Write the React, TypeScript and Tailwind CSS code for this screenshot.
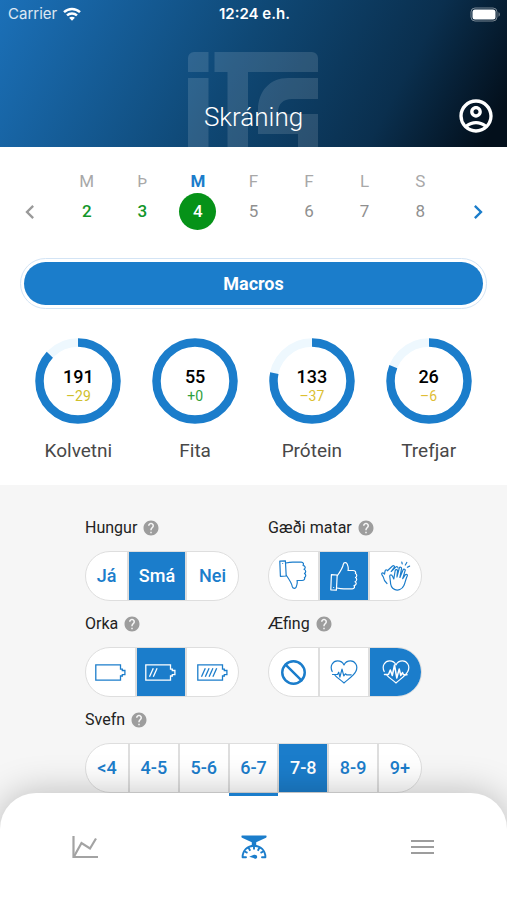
import { useState, type ReactNode } from 'react';
import { Ban } from 'lucide-react';
import { MdChevronLeft, MdChevronRight, MdHelp, MdOutlineAccountCircle } from 'react-icons/md';

const days = [
  { letter: 'M', date: 2, logged: true },
  { letter: 'Þ', date: 3, logged: true },
  { letter: 'M', date: 4, logged: true },
  { letter: 'F', date: 5, logged: false },
  { letter: 'F', date: 6, logged: false },
  { letter: 'L', date: 7, logged: false },
  { letter: 'S', date: 8, logged: false },
];

const macros = [
  { name: 'Kolvetni', value: 191, diff: '–29', progress: 0.868, color: 'text-[#cfc02c]' },
  { name: 'Fita', value: 55, diff: '+0', progress: 1, color: 'text-[#2fa03c]' },
  { name: 'Prótein', value: 133, diff: '–37', progress: 0.782, color: 'text-[#dcc030]' },
  { name: 'Trefjar', value: 26, diff: '–6', progress: 0.81, color: 'text-[#e0bd35]' },
];

function StatusBar() {
  return (
    <div className="self-start grid grid-cols-3 items-center pl-2 pr-1.5 pt-1 font-['Inter',sans-serif] text-[15px] leading-5">
      <div className="flex items-center gap-1.5">
        <span className="text-white/85">Carrier</span>
        <svg width="18" height="14" viewBox="0 0 18 14" fill="none" stroke="#fff" strokeWidth="2.4">
          <path d="M1 5.2C5.5.9 12.5.9 17 5.2" />
          <path d="M4 8.4c2.8-2.6 7.2-2.6 10 0" />
          <path d="M9 13.8 6.1 10.8c1.6-1.4 4.2-1.4 5.8 0z" fill="#fff" stroke="none" />
        </svg>
      </div>
      <span className="text-center font-semibold">12:24 e.h.</span>
      <svg className="justify-self-end" width="31" height="15" viewBox="0 0 31 15">
        <rect x="1" y="1" width="26" height="13" rx="4" fill="none" stroke="#fff" strokeOpacity=".45" />
        <rect x="2.500" y="2.500" width="23" height="10" rx="2.500" fill="#fff" />
        <path d="M28.5 5.3c1.8.6 1.8 3.8 0 4.4z" fill="#fff" fillOpacity=".45" />
      </svg>
    </div>
  );
}

function LogoMark() {
  return (
    <svg width="131" height="95" viewBox="0 0 131 95" fill="#fff" fillOpacity=".13">
      <path d="M0 20V6a6 6 0 0 1 6-6h14.500v20zM0 26h20.500v69H0z" />
      <path d="M26.500 0H124a6 6 0 0 1 6 6v14H60v75H39.500V20h-13z" />
      <path d="M130 26v21h-26c-9 0-14 5-14 14v1h40v33h-20V82H70V58c0-19 12-32 30-32z" />
    </svg>
  );
}

function Ring({ progress }: { progress: number }) {
  const length = 2 * Math.PI * 38.5;
  return (
    <svg className="col-start-1 row-start-1 -rotate-90" width="86" height="86" viewBox="0 0 86 86" fill="none" strokeWidth="8.500">
      <circle cx="43" cy="43" r="38.500" stroke="#eef8fe" />
      <circle cx="43" cy="43" r="38.500" stroke="#1b7dcb" strokeDasharray={`${length * progress} ${length}`} />
    </svg>
  );
}

function Thumb({ up = false }: { up?: boolean }) {
  return (
    <svg
      className={up ? '-scale-y-100' : 'mb-1'}
      width="28"
      height="29"
      viewBox="0 0 28 29"
      fill="none"
      stroke="currentColor"
      strokeWidth="1.200"
      strokeLinejoin="round"
    >
      <path d="M.8 1.200 6.400.8l.8 15.200-5.800.3z" />
      <path d="M3.600 3.300v.8" />
      <path d="M6.800 3c3-.6 5-1 8-.8h7.400c2.200.1 2.800 1.700 1.800 3.100 2.600.4 2.800 3 1 4 2 .6 2.300 3.200.5 4.200 1.700 1 1.600 3.400-.1 4 .8 1.800-.4 3-2.400 3h-5c.8 2.600 0 4.500-.8 6.500-.7 1.900-3.500 1.700-3.900-.3-.6-3.700-3.500-7.900-6.200-11.700" />
    </svg>
  );
}

function Clap() {
  return (
    <svg width="30" height="30" viewBox="0 0 30 30" fill="none" stroke="currentColor" strokeWidth="1.200" strokeLinecap="round" strokeLinejoin="round">
      <path d="M9.400 20.500 8.700 15c.2-1.600 2.200-1.500 2.700 0l1.400 3 1.400-8.500c.5-1.400 2.400-1 2.300.5l-.6 6 2.400-9c.6-1.400 2.500-.8 2.200.8l-1.600 8.600 3.200-7.700c.7-1.200 2.500-.4 2 1l-2.400 8 2.700-4c.9-1 2.400.1 1.800 1.300-1.700 3.500-1.700 6-3.300 9.500-1.800 4-6 5.500-9.400 3.900-3.400-1.600-4.100-5.500-4.100-7.900z" />
      <path d="M6 22.500C3.500 20.500 2.700 18.500 2.300 16L.9 13.600c-.6-1.400.8-2.200 1.800-1.200l.8.8.6-3.400c.4-1.500 1.900-1.300 2.300 0L11.500 5c1.200-1 2.400.2 1.700 1.400l-3 4.100 4.500-4.400c1-.9 2.300-.3 2.300.9" />
      <path d="m21.200 2.800-.4-1.600M24.300 4l1.500-2.500M26.400 6.300l2.200-1.200" />
    </svg>
  );
}

function Battery({ bars = 0 }: { bars?: number }) {
  return (
    <svg width="31" height="17" viewBox="0 0 31 17" fill="none" stroke="currentColor" strokeWidth="1.300">
      <path d="M.8.800h24.700v4.400h1.800v1.300h2.600v4.200h-2.600V12h-1.800v4.200H.8z" />
      {Array.from({ length: bars }, (_, i) => (
        <path key={i} d={`M${4.5 + i * 3.8} 12.800 ${8.3 + i * 3.8} 4.200`} />
      ))}
    </svg>
  );
}

function HeartPulse({ strong = false }: { strong?: boolean }) {
  return (
    <svg width="28" height="24" viewBox="0 0 28 24" fill="none" stroke="currentColor" strokeWidth="1.200" strokeLinecap="round" strokeLinejoin="round">
      <path d="M2.200 11.500C-.7 5.500 3.300.9 7.500.9c3 0 5.400 1.700 6.500 4.100C15.100 2.600 17.500.9 20.500.9c4.200 0 8.200 4.600 5.300 10.600C23.800 15.500 18.500 19 14 23 10.800 20.200 7.500 17.800 5 15.300" />
      {strong ? (
        <path d="M2.500 14.500h4L8.300 10l2 5.500L12.500 5l2.300 13 2.400-9 1.600 6.500 1.700-3 1 2.200H25" strokeWidth="1.500" />
      ) : (
        <path d="M2.500 14.500h5l1.200-2.300 1.200 5 2.100-8 1.800 6.600 1.600-2 1.200 1h4.600" />
      )}
    </svg>
  );
}

type Option = { id: string; content: ReactNode };

function Segmented({ label, name, options, initial, columns }: {
  label: string;
  name: string;
  options: Option[];
  initial: string;
  columns: string;
}) {
  const [selected, setSelected] = useState(initial);

  return (
    <div role="radiogroup" aria-labelledby={`${name}-label`}>
      <div className="flex items-center gap-[5px] h-6">
        <span id={`${name}-label`} className="text-base leading-6 text-[#222]">{label}</span>
        <button type="button" aria-label={`Hjálp: ${label}`} className="text-[#9d9d9d]">
          <MdHelp size={18} />
        </button>
      </div>
      <div className={`mt-[11px] h-[50px] grid ${columns} rounded-full border border-[#dedede] bg-white overflow-hidden divide-x-2 divide-[#dedede]`}>
        {options.map((option) => (
          <label
            key={option.id}
            className="relative flex items-center justify-center cursor-pointer text-lg font-medium text-[#1b7dcb] has-checked:bg-[#1b7dcb] has-checked:text-white"
          >
            <input
              type="radio"
              name={name}
              value={option.id}
              aria-label={option.id}
              checked={selected === option.id}
              onChange={() => setSelected(option.id)}
              className="sr-only"
            />
            {option.content}
          </label>
        ))}
      </div>
    </div>
  );
}

const textOptions = (values: string[]) => values.map((value) => ({ id: value, content: value }));

function BottomNav() {
  return (
    <nav className="relative z-10 flex-1 min-h-[107px] rounded-t-[36px] bg-white shadow-[0_0_36px_rgba(0,0,0,0.25)] grid grid-cols-3">
      <a href="#tolfraedi" aria-label="Tölfræði" className="flex justify-center pt-[42px] text-[#a3a3a3]">
        <svg width="26" height="24" viewBox="0 0 26 24" fill="none" stroke="currentColor" strokeWidth="2.200">
          <path d="M1.500 1v21H26" />
          <path d="m2 21.500 7.500-13.500 8.500 5.500L24 3.500" />
        </svg>
      </a>
      <a href="#skraning" aria-label="Skráning" className="flex flex-col items-center text-[#1b7dcb]">
        <span className="h-[3px] w-[49px] bg-[#1b7dcb]" />
        <svg className="mt-[39px]" width="26" height="24" viewBox="0 0 26 24" fill="none" stroke="currentColor" strokeWidth="1.900">
          <path d="M1 .5h24c.8 0 .8 1.800 0 2.300L15.200 7.200v3.300h-4.400V7.200L1 2.800C.2 2.300.2.500 1 .5z" fill="currentColor" stroke="none" />
          <path d="M5 22.200H1.600C1.600 15.500 6.500 10.700 13 10.700s11.400 4.800 11.400 11.500H21" strokeLinecap="round" strokeLinejoin="round" />
          <path d="M13 11v3.600M7.600 12.800l1.600 2.900M18.400 12.800l-1.600 2.900M3.800 16.500l2.700 1.400M22.200 16.500l-2.700 1.400" />
          <path d="M8.200 21.800 12.300 20c2-.8 3.900.2 3.900 1.900s-2.300 2.300-3.700 1.200z" fill="currentColor" stroke="none" />
        </svg>
      </a>
      <button type="button" aria-label="Valmynd" className="flex justify-center pt-[46px] text-[#9d9d9d]">
        <svg width="23" height="16" viewBox="0 0 23 16" stroke="currentColor" strokeWidth="2.200">
          <path d="M0 2h23M0 8h23M0 14h23" />
        </svg>
      </button>
    </nav>
  );
}

export default function App() {
  const [selectedDay, setSelectedDay] = useState(4);

  return (
    <div className="min-h-screen flex flex-col bg-white font-['Roboto',sans-serif]">
      <header className="shrink-0 grid grid-rows-[52px_95px] text-white bg-[linear-gradient(118deg,#1b70b8_0%,#0f4875_46%,#0a2f4e_76%,#030f1b_96%)]">
        <StatusBar />
        <div className="grid grid-cols-1 items-center">
          <div className="col-start-1 row-start-1 flex justify-center">
            <LogoMark />
          </div>
          <div className="col-start-1 row-start-1 grid grid-cols-[1fr_auto_1fr] items-center pt-8">
            <h1 className="col-start-2 pt-0.5 text-[26px] leading-8 font-light">Skráning</h1>
            <button type="button" aria-label="Aðgangur" className="justify-self-end mr-[11px]">
              <MdOutlineAccountCircle size={40} />
            </button>
          </div>
        </div>
      </header>

      <section className="flex pt-[22px]">
        <button type="button" aria-label="Fyrri vika" className="w-[59px] flex justify-center pt-[29px] text-[#9a9a9a]">
          <MdChevronLeft size={28} />
        </button>
        <div className="flex-1 grid grid-cols-7">
          {days.map((day) => {
            const active = day.date === selectedDay;
            return (
              <button key={day.date} type="button" className="flex flex-col items-center text-[17px]" onClick={() => setSelectedDay(day.date)}>
                <span className={`leading-6 ${active ? 'font-bold text-[#1b7dcb]' : 'text-[#a8a8a8]'}`}>{day.letter}</span>
                <span
                  className={`size-[37px] rounded-full flex items-center justify-center ${
                    active ? 'bg-[#069218] font-medium text-white' : day.logged ? 'font-medium text-[#12962a]' : 'text-[#8f8f8f]'
                  }`}
                >
                  {day.date}
                </span>
              </button>
            );
          })}
        </div>
        <button type="button" aria-label="Næsta vika" className="w-[59px] flex justify-center pt-[29px] text-[#1b7dcb]">
          <MdChevronRight size={28} />
        </button>
      </section>

      <div className="mt-7 mx-5 rounded-full border border-[#d3e4f5] p-[3px]">
        <button type="button" className="block w-full h-[43px] rounded-full bg-[#1b7dcb] text-lg font-bold text-white">
          Macros
        </button>
      </div>

      <section className="grid grid-cols-4 px-5 pt-[29px] pb-[22px]">
        {macros.map((macro) => (
          <div key={macro.name} className="flex flex-col items-center">
            <div className="grid grid-cols-1 place-items-center">
              <Ring progress={macro.progress} />
              <div className="col-start-1 row-start-1 text-center pt-2">
                <div className="text-lg leading-[22px] font-medium text-black">{macro.value}</div>
                <div className={`text-sm leading-4 ${macro.color}`}>{macro.diff}</div>
              </div>
            </div>
            <div className="mt-[15px] text-[19px] leading-6 text-[#484848]">{macro.name}</div>
          </div>
        ))}
      </section>

      <main className="flex-1 flex flex-col bg-[#f6f6f6] pt-[31px]">
        <div className="w-full max-w-[337px] mx-auto grid grid-cols-2 gap-x-[29px] gap-y-[11px]">
          <Segmented
            label="Hungur"
            name="hungur"
            initial="Smá"
            columns="grid-cols-[43px_1fr_51px]"
            options={textOptions(['Já', 'Smá', 'Nei'])}
          />
          <Segmented
            label="Gæði matar"
            name="gaedi"
            initial="Góð"
            columns="grid-cols-3"
            options={[
              { id: 'Slæm', content: <Thumb /> },
              { id: 'Góð', content: <Thumb up /> },
              { id: 'Frábær', content: <Clap /> },
            ]}
          />
          <Segmented
            label="Orka"
            name="orka"
            initial="Miðlungs"
            columns="grid-cols-3"
            options={[
              { id: 'Lítil', content: <Battery /> },
              { id: 'Miðlungs', content: <Battery bars={2} /> },
              { id: 'Mikil', content: <Battery bars={4} /> },
            ]}
          />
          <Segmented
            label="Æfing"
            name="aefing"
            initial="Erfið"
            columns="grid-cols-3"
            options={[
              { id: 'Engin', content: <Ban size={27} strokeWidth={2.2} /> },
              { id: 'Létt', content: <HeartPulse /> },
              { id: 'Erfið', content: <HeartPulse strong /> },
            ]}
          />
          <div className="col-span-2">
            <Segmented
              label="Svefn"
              name="svefn"
              initial="7-8"
              columns="grid-cols-[44px_repeat(5,1fr)_42px]"
              options={textOptions(['<4', '4-5', '5-6', '6-7', '7-8', '8-9', '9+'])}
            />
          </div>
        </div>
        <BottomNav />
      </main>
    </div>
  );
}
